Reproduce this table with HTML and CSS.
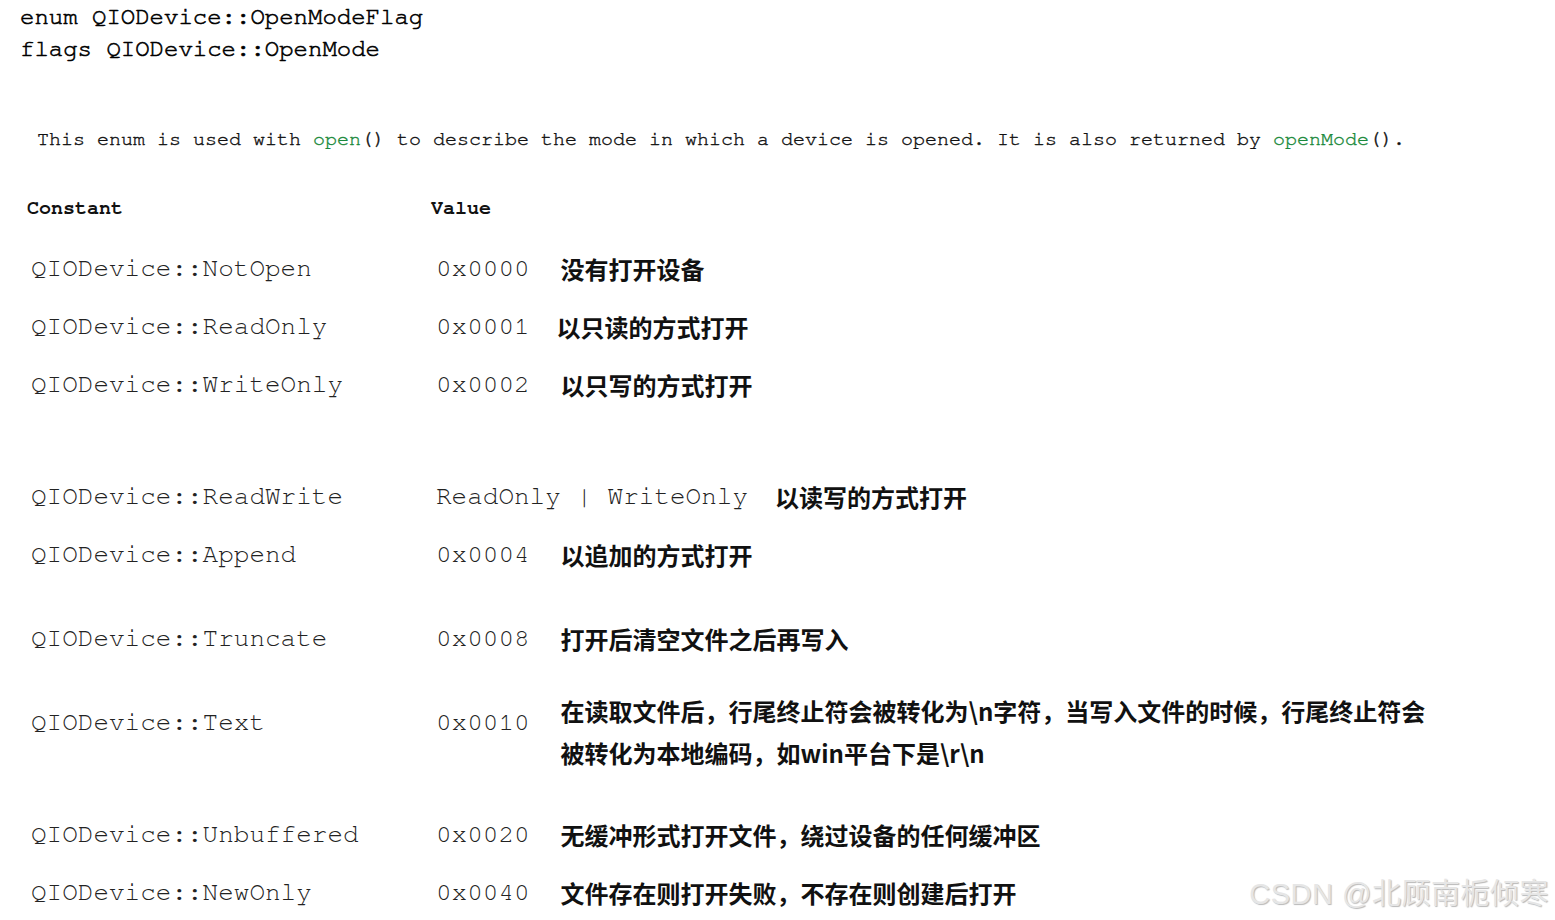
FILE: index.html
```html
<!DOCTYPE html>
<html lang="zh-CN">
<head>
  <meta charset="UTF-8" />
  <title>QIODevice::OpenModeFlag</title>
  <link rel="stylesheet" href="styles.css">
</head>
<body>
  <div class="page">
    <div class="signature">
      <div>enum QIODevice::OpenModeFlag</div>
      <div>flags QIODevice::OpenMode</div>
    </div>

    <p class="desc">This enum is used with <span class="link">open</span>() to describe the mode in which a device is opened. It is also returned by <span class="link">openMode</span>().</p>

    <div class="table">
      <div class="head">
        <div class="name">Constant</div>
        <div class="value">Value</div>
      </div>

      <div class="row">
        <div class="name">QIODevice::NotOpen</div>
        <div class="value">0x0000</div>
        <div class="note">没有打开设备</div>
      </div>
      <div class="row">
        <div class="name">QIODevice::ReadOnly</div>
        <div class="value">0x0001</div>
        <div class="note tight">以只读的方式打开</div>
      </div>
      <div class="row">
        <div class="name">QIODevice::WriteOnly</div>
        <div class="value">0x0002</div>
        <div class="note">以只写的方式打开</div>
      </div>
      <div class="row gap-lg">
        <div class="name">QIODevice::ReadWrite</div>
        <div class="value">ReadOnly | WriteOnly</div>
        <div class="note tight">以读写的方式打开</div>
      </div>
      <div class="row">
        <div class="name">QIODevice::Append</div>
        <div class="value">0x0004</div>
        <div class="note">以追加的方式打开</div>
      </div>
      <div class="row gap-md">
        <div class="name">QIODevice::Truncate</div>
        <div class="value">0x0008</div>
        <div class="note">打开后清空文件之后再写入</div>
      </div>
      <div class="row row-multi gap-md">
        <div class="name">QIODevice::Text</div>
        <div class="value">0x0010</div>
        <div class="note">在读取文件后，行尾终止符会被转化为\n字符，当写入文件的时候，行尾终止符会<br>被转化为本地编码，如win平台下是\r\n</div>
      </div>
      <div class="row after-multi">
        <div class="name">QIODevice::Unbuffered</div>
        <div class="value">0x0020</div>
        <div class="note">无缓冲形式打开文件，绕过设备的任何缓冲区</div>
      </div>
      <div class="row">
        <div class="name">QIODevice::NewOnly</div>
        <div class="value">0x0040</div>
        <div class="note">文件存在则打开失败，不存在则创建后打开</div>
      </div>
    </div>

    <div class="watermark">CSDN @北顾南栀倾寒</div>
  </div>
</body>
</html>
```

FILE: styles.css
```css
* { box-sizing: border-box; margin: 0; padding: 0; }
body {
  background: #fff;
  color: #111;
  font-family: 'Nimbus Mono PS', 'FreeMono', 'Courier New', 'Liberation Mono', 'Noto Sans CJK SC', monospace;
}
.page {
  position: relative;
  width: 1555px;
  height: 920px;
  overflow: hidden;
}
.signature {
  padding: 1px 0 0 20px;
  font-size: 24px;
  line-height: 32px;
  color: #000;
  -webkit-text-stroke: 0.6px #000;
}
.desc {
  margin-top: 59px;
  padding-left: 37px;
  font-size: 20px;
  line-height: 30px;
  color: #111;
  -webkit-text-stroke: 0.4px currentColor;
}
.link { color: #1b8a3c; }

.table { margin-top: 39px; padding-left: 27px; }
.head {
  display: flex;
  font-size: 20px;
  line-height: 30px;
  font-weight: bold;
  color: #111;
  margin-bottom: 16px;
}
.head .name { width: 404px; }

.row {
  display: flex;
  align-items: center;
  height: 58px;
  padding-left: 4px;
  font-size: 26px;
  color: #222;
}
.row .name { width: 405px; flex-shrink: 0; }
.row .value { flex-shrink: 0; white-space: pre; }
.note {
  margin-left: 31px;
  padding-top: 1px;
  font-family: 'Noto Sans CJK SC', sans-serif;
  font-size: 24px;
  font-weight: bold;
  color: #111;
}
.note.tight { margin-left: 27px; }
.gap-lg { margin-top: 54px; }
.gap-md { margin-top: 26px; }

.row-multi {
  height: auto;
  align-items: flex-start;
}
.row-multi .name,
.row-multi .value { padding-top: 9px; line-height: 40px; }
.row-multi .note { line-height: 42px; padding-top: 0; margin-top: -3px; }
.after-multi { margin-top: 31px; }

.watermark {
  position: absolute;
  right: 6px;
  bottom: 8px;
  font-family: 'Liberation Sans', 'Noto Sans CJK SC', sans-serif;
  font-size: 29px;
  color: #e6e6e6;
  text-shadow: 1px 1px 1px #b9b9b9;
  letter-spacing: 0.5px;
}
```
